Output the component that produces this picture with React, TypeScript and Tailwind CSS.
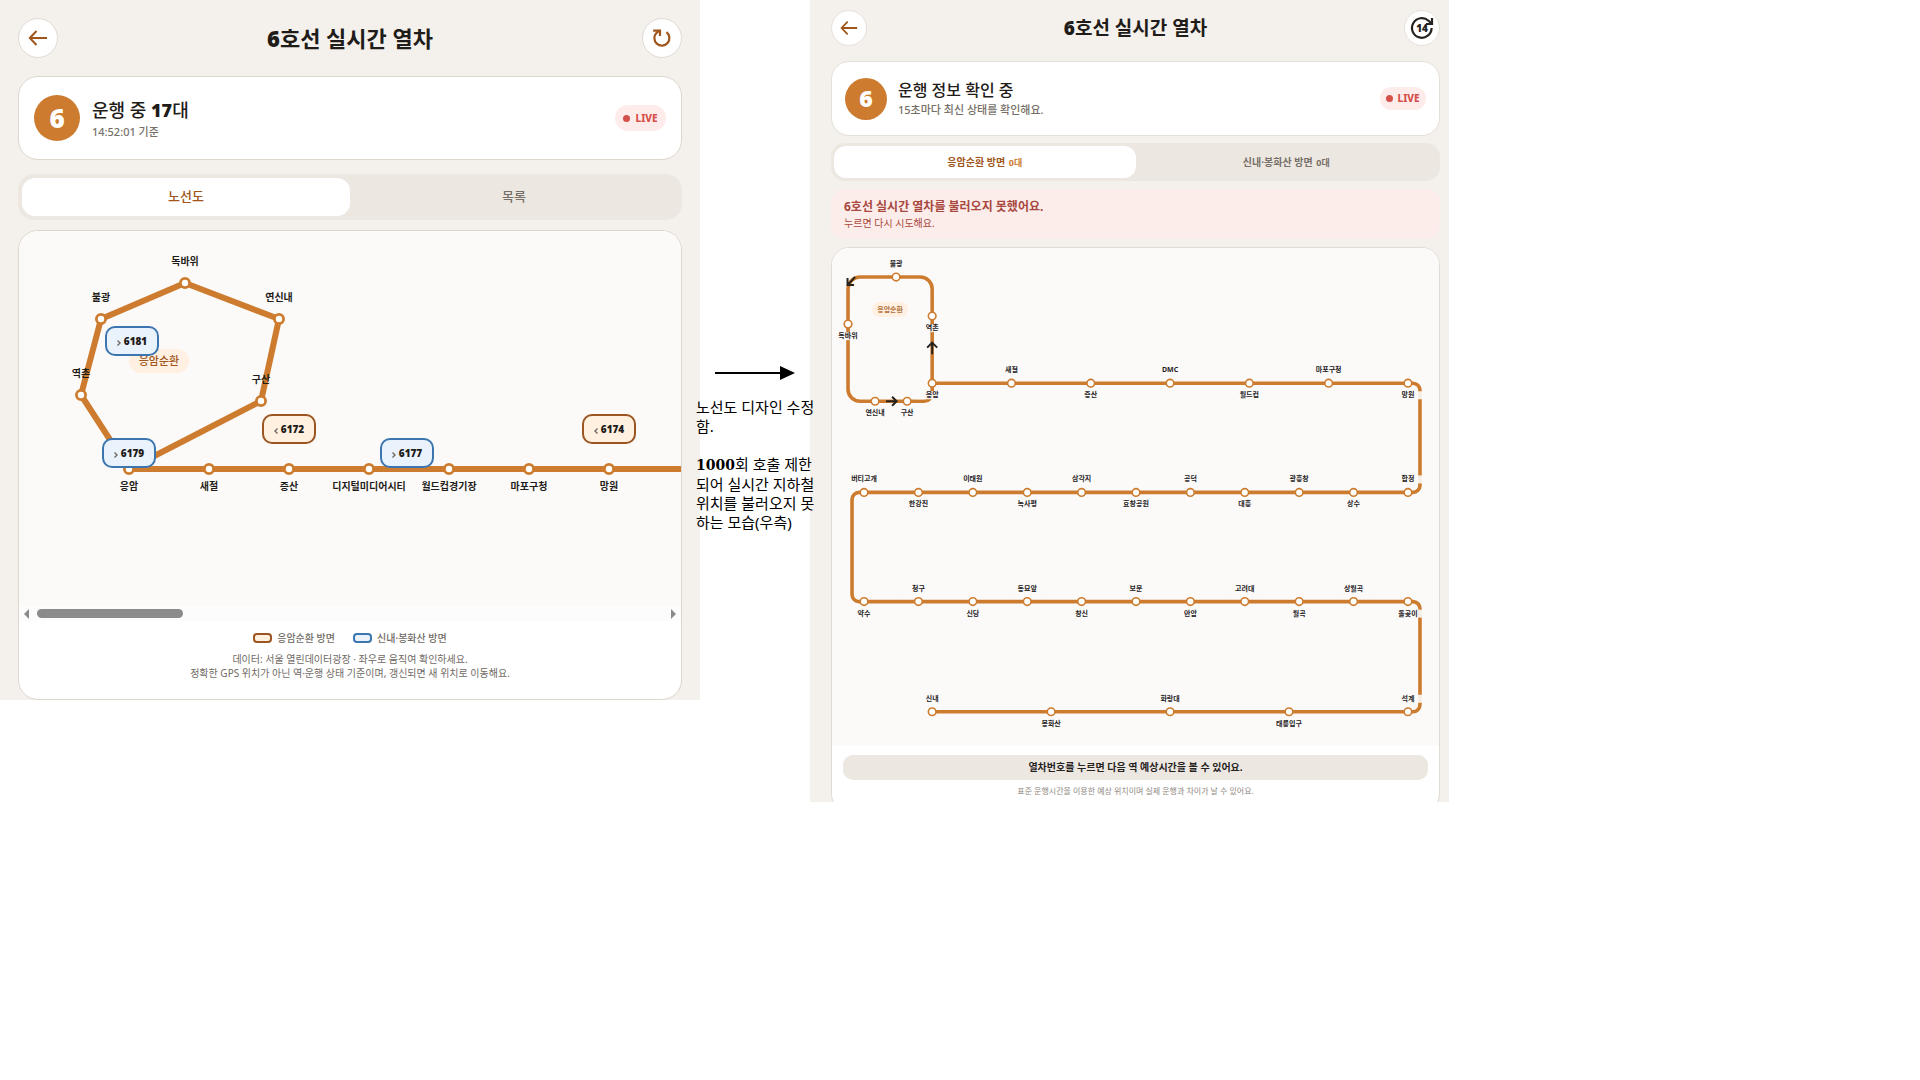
import type { ReactNode } from "react";

type Side = "up" | "down";
type Station = { name: string; x: number; y: number; side: Side };
type Train = { no: string; x: number; y: number; dir: "inner" | "outer" };

const LINE = "#cd7c2f";

// Scrollable map (first version)
const loopStations: Station[] = [
  { name: "독바위", x: 166, y: 52, side: "up" },
  { name: "불광", x: 82, y: 88, side: "up" },
  { name: "연신내", x: 260, y: 88, side: "up" },
  { name: "역촌", x: 62, y: 164, side: "up" },
  { name: "구산", x: 242, y: 170, side: "up" },
];

const trunkStations: Station[] = [
  "응암", "새절", "증산", "디지털미디어시티", "월드컵경기장", "마포구청", "망원",
].map((name, i) => ({ name, x: 110 + i * 80, y: 238, side: "down" as Side }));

const trains: Train[] = [
  { no: "6181", x: 86, y: 95, dir: "outer" },
  { no: "6179", x: 83, y: 207, dir: "outer" },
  { no: "6172", x: 243, y: 183, dir: "inner" },
  { no: "6177", x: 361, y: 207, dir: "outer" },
  { no: "6174", x: 563, y: 183, dir: "inner" },
];

// Folded map (second version)
const row = (names: string[], start: number, end: number, y: number, first: Side): Station[] =>
  names.map((name, i) => ({
    name,
    x: start + ((end - start) * i) / (names.length - 1),
    y,
    side: (i % 2 === 0) === (first === "up") ? "up" : "down",
  }));

const foldedStations: Station[] = [
  { name: "불광", x: 64, y: 29, side: "up" },
  { name: "독바위", x: 16, y: 76, side: "down" },
  { name: "역촌", x: 100, y: 68, side: "down" },
  { name: "연신내", x: 43, y: 153, side: "down" },
  { name: "구산", x: 75, y: 153, side: "down" },
  ...row(["응암", "새절", "증산", "DMC", "월드컵", "마포구청", "망원"], 100, 575, 135, "down"),
  ...row(["버티고개", "한강진", "이태원", "녹사평", "삼각지", "효창공원", "공덕", "대흥", "광흥창", "상수", "합정"], 32, 575, 244, "up"),
  ...row(["약수", "청구", "신당", "동묘앞", "창신", "보문", "안암", "고려대", "월곡", "상월곡", "돌곶이"], 32, 575, 353, "down"),
  ...row(["신내", "봉화산", "화랑대", "태릉입구", "석계"], 100, 575, 463, "up"),
];

function BackIcon({ className }: { className: string }) {
  return (
    <svg viewBox="0 0 20 20" className={className} fill="none" stroke="#a0561b" strokeWidth="2">
      <path d="M19 10H2M8.5 3L1.8 10l6.7 7" />
    </svg>
  );
}

function ReloadIcon() {
  return (
    <svg viewBox="0 0 20 20" className="h-5 w-5" fill="none" stroke="#a0561b" strokeWidth="2.2">
      <path d="M14.5 4.2A7.5 7.5 0 1 1 4.6 4.8L7.6 2.6" />
      <path d="M1.2 2.6H8V8" />
    </svg>
  );
}

function CountdownIcon() {
  return (
    <svg viewBox="0 0 24 24" className="h-6 w-6" fill="none" stroke="#26221e" strokeWidth="2.2">
      <path d="M21.6 12A9.8 9.8 0 1 1 18.5 4.8L21.5 7.5" />
      <path d="M22 2v6h-6" />
      <text x="12" y="15.6" textAnchor="middle" fontSize="10" fontWeight="900" fill="#26221e" stroke="none">
        14
      </text>
    </svg>
  );
}

function Live({ className }: { className: string }) {
  return (
    <span className={`flex shrink-0 items-center justify-center rounded-full bg-[#fdecea] text-[10px] font-extrabold text-[#d5504a] ${className}`}>
      <i className="h-[7px] w-[7px] rounded-full bg-[#d5504a]" />
      LIVE
    </span>
  );
}

function OldMap() {
  return (
    <div className="relative h-[375px] overflow-hidden bg-[#fbfaf8]">
      <svg width="900" height="375" className="block max-w-none">
        <g stroke={LINE} strokeWidth="6" fill="none" strokeLinejoin="round">
          <path d="M110 238L62 164L82 88L166 52L260 88L242 170L110 238H900" />
        </g>
        {[...loopStations, ...trunkStations].map((s) => (
          <g key={s.name}>
            <circle cx={s.x} cy={s.y} r="4.6" fill="#fff" stroke={LINE} strokeWidth="2.8" />
            <text
              x={s.x}
              y={s.side === "up" ? s.y - 18 : s.y + 21}
              textAnchor="middle"
              fontSize="10"
              fontWeight="700"
              fill="#1f1c19"
            >
              {s.name}
            </text>
          </g>
        ))}
        <rect x="110" y="118" width="60" height="24" rx="12" fill="#fff0e2" />
        <text x="140" y="134" textAnchor="middle" fontSize="11" fontWeight="500" fill="#a0561b">
          응암순환
        </text>
      </svg>
      {trains.map((t) => (
        <button
          key={t.no}
          style={{ left: t.x, top: t.y }}
          className={`absolute flex h-[30px] w-[54px] items-center justify-center gap-[3px] rounded-[10px] border-2 text-[10px] font-black text-[#1f1c19] ${
            t.dir === "outer" ? "border-[#3b76b0] bg-[#eaf2fc]" : "border-[#9c5421] bg-[#fff0e0]"
          }`}
        >
          <svg viewBox="0 0 4 6" className="mt-1 h-[6px] w-1" fill="none" stroke="#6f6a64" strokeWidth="1.4">
            <path d={t.dir === "outer" ? "M.5 .5L3 3L.5 5.5" : "M3.5 .5L1 3l2.5 2.5"} />
          </svg>
          {t.no}
        </button>
      ))}
    </div>
  );
}

function FoldedMap() {
  return (
    <svg viewBox="0 0 606 497" className="block h-auto w-full bg-[#fbfaf8]">
      <g stroke={LINE} strokeWidth="3.6" fill="none">
        <path d="M100 135V41a12 12 0 0 0-12-12H28a12 12 0 0 0-12 12V141a12 12 0 0 0 12 12H92a8 8 0 0 0 8-8z" />
        <path d="M100 135H580a7 7 0 0 1 7 7V237a7 7 0 0 1-7 7H27a7 7 0 0 0-7 7V346a7 7 0 0 0 7 7H580a7 7 0 0 1 7 7V456a7 7 0 0 1-7 7H100" />
      </g>
      {foldedStations.map((s) => {
        const mid = s.side === "up" ? s.y - 13 : s.y + 12;
        return (
          <g key={s.name}>
            <rect x={s.x - 16} y={mid - 4} width="32" height="8" fill="#fbfaf8" opacity=".9" />
            <circle cx={s.x} cy={s.y} r="3.8" fill="#fff" stroke={LINE} strokeWidth="1.6" />
            <text x={s.x} y={mid + 2} textAnchor="middle" fontSize="7" fontWeight="700" fill="#26221e">
              {s.name}
            </text>
          </g>
        );
      })}
      <g stroke="#26221e" strokeWidth="2" fill="none">
        <path d="M100 106V95M95 99.5l5-5l5 5" />
        <path d="M54 153H64M60 148.5l4.5 4.5l-4.5 4.5" />
        <path d="M23 29L16 36.5M15.5 30V37H22" />
      </g>
      <rect x="40" y="54" width="36" height="15" rx="7.5" fill="#fff0e2" />
      <text x="58" y="64" textAnchor="middle" fontSize="7" fontWeight="700" fill="#b4713a">
        응암순환
      </text>
    </svg>
  );
}

function Legend({ swatch, children }: { swatch: string; children: ReactNode }) {
  return (
    <span className="flex items-center gap-[5px]">
      <i className={`h-[10px] w-[19px] rounded-[4px] border-2 ${swatch}`} />
      {children}
    </span>
  );
}

function BeforeScreen() {
  return (
    <section className="min-w-0 bg-[#f4f1ec] px-[18px] pt-[18px]">
      <header className="flex h-10 items-center justify-between">
        <button aria-label="뒤로" className="flex h-10 w-10 items-center justify-center rounded-full border border-[#e0dad2] bg-white">
          <BackIcon className="h-5 w-5" />
        </button>
        <h1 className="text-[22px] font-bold text-[#1f1c19]">
          <span className="font-black">6</span>호선 실시간 열차
        </h1>
        <button aria-label="새로고침" className="flex h-10 w-10 items-center justify-center rounded-full border border-[#e0dad2] bg-white">
          <ReloadIcon />
        </button>
      </header>

      <div className="mt-[18px] flex h-[84px] items-center rounded-[20px] border border-[#ddd6cd] bg-white px-[15px]">
        <span className="flex h-[46px] w-[46px] items-center justify-center rounded-full bg-[#cd7c2f] text-[26px] font-black text-white">6</span>
        <div className="ml-3 flex-1 pt-[3px]">
          <h2 className="text-[18px] leading-6 font-medium text-[#1f1c19]">
            운행 중 <span className="font-black">17</span>대
          </h2>
          <p className="text-[11px] leading-5 font-medium text-[#766f68]">14:52:01 기준</p>
        </div>
        <Live className="h-[26px] w-[51px] gap-[5px]" />
      </div>

      <div className="mt-[14px] flex h-[46px] rounded-[16px] bg-[#ece7e1] p-1 text-[13px] font-medium">
        <button className="flex-1 rounded-[13px] bg-white text-[#a0561b]">노선도</button>
        <button className="flex-1 text-[#766f68]">목록</button>
      </div>

      <div className="mt-[10px] overflow-hidden rounded-[20px] border border-[#ddd6cd] bg-white">
        <OldMap />
        <div className="flex h-[15px] items-center bg-[#fcfcfc] px-[5px]">
          <i className="border-y-[5px] border-r-[5px] border-y-transparent border-r-[#8a8a8a]" />
          <i className="ml-2 h-[9px] w-[146px] rounded-full bg-[#8b8b8b]" />
          <i className="ml-auto border-y-[5px] border-l-[5px] border-y-transparent border-l-[#8a8a8a]" />
        </div>
        <div className="flex justify-center gap-[18px] pt-[9px] text-[10px] leading-4 font-medium text-[#6f6a64]">
          <Legend swatch="border-[#9c5421] bg-[#fff0e0]">응암순환 방면</Legend>
          <Legend swatch="border-[#3b76b0] bg-[#eaf2fc]">신내·봉화산 방면</Legend>
        </div>
        <p className="pt-[6px] pb-[19px] text-center text-[10px] leading-[14px] text-[#6f6a64]">
          데이터: 서울 열린데이터광장 · 좌우로 움직여 확인하세요.
          <br />
          정확한 GPS 위치가 아닌 역·운행 상태 기준이며, 갱신되면 새 위치로 이동해요.
        </p>
      </div>
    </section>
  );
}

function AfterScreen() {
  return (
    <section className="min-w-0 overflow-hidden bg-[#f4f1ec] pt-[10px] pr-[9px] pl-[21px]">
      <header className="flex h-9 items-center justify-between">
        <button aria-label="뒤로" className="flex h-9 w-9 items-center justify-center rounded-full border border-[#e6e1da] bg-white">
          <BackIcon className="h-[18px] w-[18px]" />
        </button>
        <h1 className="text-[19px] font-bold text-[#1f1c19]">
          <span className="font-black">6</span>호선 실시간 열차
        </h1>
        <button aria-label="새로고침" className="flex h-9 w-9 items-center justify-center rounded-full border border-[#e6e1da] bg-white">
          <CountdownIcon />
        </button>
      </header>

      <div className="mt-[15px] flex h-[75px] items-center rounded-[18px] border border-[#e4dfd8] bg-white px-[13px]">
        <span className="flex h-[42px] w-[42px] items-center justify-center rounded-full bg-[#cd7c2f] text-[23px] font-black text-white">6</span>
        <div className="ml-[11px] flex-1 pt-[3px]">
          <h2 className="text-[16px] leading-5 font-medium text-[#1f1c19]">운행 정보 확인 중</h2>
          <p className="text-[11px] leading-5 font-medium text-[#766f68]">15초마다 최신 상태를 확인해요.</p>
        </div>
        <Live className="h-[23px] w-[46px] gap-1" />
      </div>

      <div className="mt-[7px] flex h-[38px] rounded-[14px] bg-[#ece7e1] p-[3px] text-[10px] font-bold">
        <button className="flex-1 rounded-[12px] bg-white text-[#a0561b]">
          응암순환 방면 <span className="ml-px text-[9px] text-[#cd7c2f]">0대</span>
        </button>
        <button className="flex-1 text-[#766f68]">
          신내·봉화산 방면 <span className="ml-px text-[9px]">0대</span>
        </button>
      </div>

      <button className="mt-[8px] block w-full rounded-[14px] bg-[#fcecea] px-[13px] pt-[10px] pb-[8px] text-left text-[#a8483f]">
        <b className="block text-[12px] leading-4 font-bold">6호선 실시간 열차를 불러오지 못했어요.</b>
        <span className="block text-[10px] leading-4">누르면 다시 시도해요.</span>
      </button>

      <div className="-mb-[10px] mt-[8px] overflow-hidden rounded-[18px] border border-[#e0dcd5] bg-white">
        <FoldedMap />
        <div className="px-[11px] pt-[9px] pb-3 text-center">
          <p className="rounded-[10px] bg-[#ece7e1] text-[10px] leading-[25px] font-bold text-[#26221e]">
            열차번호를 누르면 다음 역 예상시간을 볼 수 있어요.
          </p>
          <p className="pt-[3px] text-[8px] leading-4 text-[#8f8982]">
            표준 운행시간을 이용한 예상 위치이며 실제 운행과 차이가 날 수 있어요.
          </p>
        </div>
      </div>
    </section>
  );
}

export default function App() {
  return (
    <main className="min-h-screen bg-white font-['Noto_Sans','Noto_Sans_CJK_KR',sans-serif]">
      <div className="grid grid-cols-[700fr_110fr_639fr_471fr] items-start">
        <BeforeScreen />
        <aside className="relative z-10 min-w-0 pt-[366px] text-black">
          <svg viewBox="0 0 80 14" className="mx-auto block h-[14px] w-20">
            <path d="M0 7H66" stroke="#000" strokeWidth="2" />
            <path d="M65 0L80 7L65 14z" />
          </svg>
          <p className="-ml-1 mt-[18px] text-[15px] leading-[19px] whitespace-nowrap">
            노선도 디자인 수정
            <br />
            함.
            <br />
            <br />
            <span className="font-['DejaVu_Serif',serif] text-[14px] font-bold">1000</span>회 호출 제한
            <br />
            되어 실시간 지하철
            <br />
            위치를 불러오지 못
            <br />
            하는 모습(우측)
          </p>
        </aside>
        <AfterScreen />
      </div>
    </main>
  );
}
